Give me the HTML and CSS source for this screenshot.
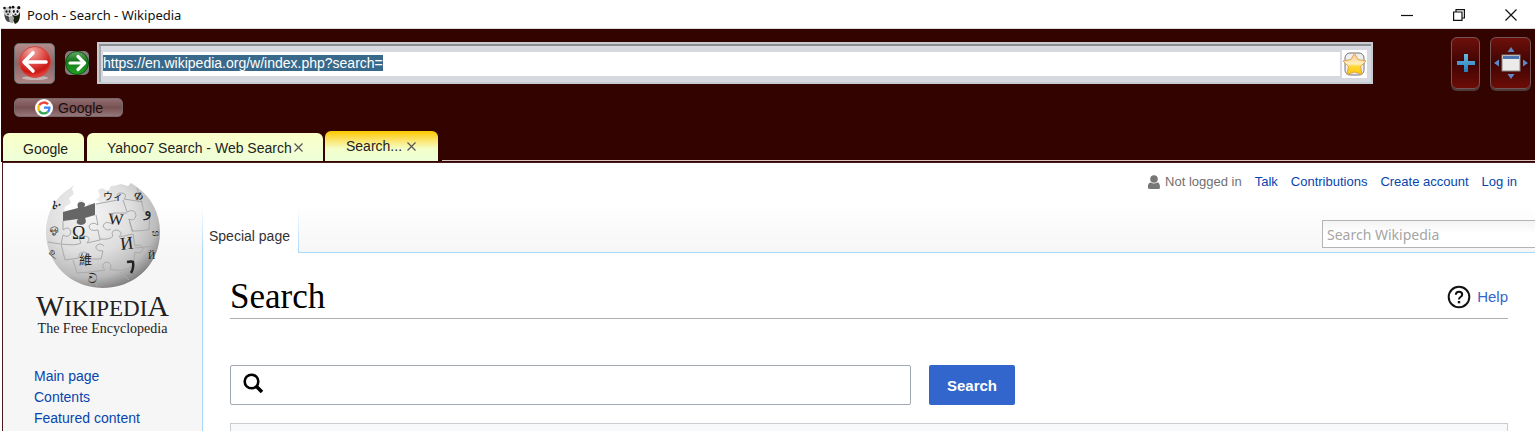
FILE: index.html
```html
<!DOCTYPE html>
<html lang="en">
<head>
<meta charset="utf-8">
<title>Pooh - Search - Wikipedia</title>
<link rel="stylesheet" href="styles.css">
</head>
<body>
<div class="window">
  <header class="titlebar">
    <svg class="app-icon" width="18" height="20" viewBox="0 0 18 20" aria-hidden="true">
      <path d="M10 5Q17 3 17 10Q17 17 12 19L9 14Z" fill="#18200f"/>
      <path d="M1 8Q7 10 7 17Q2 18 1 8Z" fill="#444"/>
      <path d="M6 12Q10 9 11 13L10 18Q6 19 6 12Z" fill="#aaa"/>
      <ellipse cx="5" cy="6.500" rx="4.500" ry="4.500" fill="#ccc"/>
      <ellipse cx="12.500" cy="6" rx="4.300" ry="4.800" fill="#e8e8e8"/>
      <g fill="#111"><circle cx="1.500" cy="3" r="1.300"/><circle cx="7" cy="2.500" r="1.200"/><circle cx="10" cy="2.200" r="1.400"/><circle cx="15.800" cy="2.700" r="1.600"/><ellipse cx="3.500" cy="6.500" rx="1" ry="1.300"/><ellipse cx="6.500" cy="6.500" rx=".8" ry="1.200"/><ellipse cx="10.800" cy="6.500" rx="1" ry="1.400"/><ellipse cx="14.500" cy="6.500" rx="1" ry="1.400"/><ellipse cx="5" cy="9.200" rx="1" ry=".7"/><ellipse cx="12.500" cy="9.200" rx="1" ry=".7"/></g>
    </svg>
    <span class="window-title">Pooh - Search - Wikipedia</span>
    <div class="window-controls">
      <button aria-label="Minimize"><svg width="12" height="12" viewBox="0 0 12 12"><path d="M0 6.500H12" stroke="#111" stroke-width="1.200"/></svg></button>
      <button aria-label="Restore"><svg width="12" height="12" viewBox="0 0 12 12" fill="none" stroke="#111" stroke-width="1.200"><path d="M.6 3H9V11.400H.6ZM3 3V.6H11.400V9H9"/></svg></button>
      <button aria-label="Close"><svg width="12" height="12" viewBox="0 0 12 12"><path d="M.5.5L11.500 11.500M11.500.5L.5 11.500" stroke="#111" stroke-width="1.200"/></svg></button>
    </div>
  </header>

  <div class="chrome">
    <div class="toolbar">
      <button class="back" aria-label="Back">
        <svg width="34" height="36" viewBox="0 0 34 36">
          <defs><radialGradient id="red" cx=".4" cy=".15" r=".9"><stop offset="0" stop-color="#f0aaa5"/><stop offset=".45" stop-color="#e04f4a"/><stop offset=".75" stop-color="#cb1713"/><stop offset="1" stop-color="#ef5750"/></radialGradient></defs>
          <ellipse cx="17" cy="33" rx="13" ry="2" fill="#c7b4b4"/>
          <circle cx="17" cy="17" r="15.500" fill="url(#red)" stroke="#c84843"/>
          <path d="M15 8L6 17L15 26M7 17H28" fill="none" stroke="#fff" stroke-width="3.600" stroke-linecap="round" stroke-linejoin="round"/>
        </svg>
      </button>
      <button class="forward" aria-label="Forward">
        <svg width="24" height="24" viewBox="0 0 24 24">
          <defs><linearGradient id="green" x2="0" y2="1"><stop stop-color="#6aa86d"/><stop offset=".4" stop-color="#16781b"/><stop offset="1" stop-color="#1ea51f"/></linearGradient></defs>
          <circle cx="12" cy="12" r="11.500" fill="url(#green)" stroke="#0c5012"/>
          <path d="M5 12H19M13 5.500L19.500 12L13 18.500" fill="none" stroke="#fff" stroke-width="3.200" stroke-linecap="round" stroke-linejoin="round"/>
        </svg>
      </button>
      <div class="address">
        <div class="address-field"><input class="url" aria-label="Address" value="https://en.wikipedia.org/w/index.php?search="></div>
        <button class="star" aria-label="Bookmark this page">
          <svg width="25" height="28" viewBox="0 0 25 28">
            <defs><linearGradient id="gold" x2="0" y2="1"><stop stop-color="#fbc78c"/><stop offset=".5" stop-color="#fff0bd"/><stop offset=".6" stop-color="#ffd83a"/><stop offset="1" stop-color="#ffc600"/></linearGradient></defs>
            <rect x="3" y="3" width="19" height="22" rx="5" fill="#eee" stroke="#777"/>
            <path d="M12.500 3.500L16 9.500L24 11L18.500 16.500L20 24.500L12.500 22L5 24.500L6.500 16.500L1 11L9 9.500Z" fill="url(#gold)" stroke="#dda34a" stroke-linejoin="round"/>
          </svg>
        </button>
      </div>
      <div class="tools">
        <button class="tool add" aria-label="New tab"><svg width="18" height="18" viewBox="0 0 18 18"><defs><linearGradient id="plus" x2="0" y2="1"><stop stop-color="#69b9e4"/><stop offset="1" stop-color="#237db7"/></linearGradient></defs><path d="M7 0H11V7H18V11H11V18H7V11H0V7H7Z" fill="url(#plus)"/></svg></button>
        <button class="tool full" aria-label="Full screen"><svg width="34" height="34" viewBox="0 0 34 34"><path d="M13.500 6L17 1L20.500 6ZM13.500 28L17 33L20.500 28ZM5 13.500V20.500L0 17ZM29 13.500V20.500L34 17Z" fill="#6288c4"/><rect x="8" y="9" width="18" height="16" fill="#ecebea" stroke="#888"/><path d="M9 10H25V13H9Z" fill="#4c75af"/></svg></button>
      </div>
    </div>
    <div class="bookmarks">
      <button class="bookmark">
        <svg width="18" height="18" viewBox="0 0 18 18" fill="none" stroke-width="2.300"><circle cx="9" cy="9" r="9" fill="#fff"/><path d="M13 5.200A5.600 5.600 0 0 0 4.200 6.200" stroke="#ea4335"/><path d="M4.200 6.200A5.600 5.600 0 0 0 4.200 11.800" stroke="#fbbc05"/><path d="M4.200 11.800A5.600 5.600 0 0 0 12.500 13.200" stroke="#34a853"/><path d="M12.500 13.200Q14.500 11.500 14.400 8.700H9" stroke="#4285f4"/></svg>
        Google
      </button>
    </div>
    <nav class="tabs" aria-label="Tabs">
      <button class="tab first">Google</button>
      <button class="tab second">Yahoo7 Search - Web Search <svg class="x" width="9" height="9" viewBox="0 0 9 9"><path d="M.5.5L8.500 8.500M8.500.5L.5 8.500"/></svg></button>
      <button class="tab current">Search... <svg class="x" width="9" height="9" viewBox="0 0 9 9"><path d="M.5.5L8.500 8.500M8.500.5L.5 8.500"/></svg></button>
      <span class="tab-line"></span>
    </nav>
  </div>

  <div class="page">
    <aside class="sidebar">
      <a class="logo" href="#">
        <svg width="116" height="108" viewBox="0 0 116 108" aria-hidden="true">
          <defs>
            <radialGradient id="globe" cx=".38" cy=".3" r=".75"><stop offset="0" stop-color="#f5f5f5"/><stop offset=".5" stop-color="#dedede"/><stop offset=".8" stop-color="#bababa"/><stop offset="1" stop-color="#777"/></radialGradient>
          </defs>
          <path d="M29 3L24 7C9 16 1 32 1 50C1 82 26 106 58 106C90 106 115 82 115 50C115 31 106 15 92 5L86 1L83 4L76 2Q70 4 66 4L63 9L57 6L53 8L55 14L51 18L55 20L50 22L47 23Q43 18 42 24L40 25L39 19Q34 16 33 22L34 26L19 29L20 25L26 21L24 16L29 12L27 7Z" fill="url(#globe)"/>
          <path d="M18 30L33 26Q31 19 37 20Q42 21 39 25L50 21V33L40 36Q43 42 36 43Q29 42 33 37L18 39Z" fill="#666"/>
          <g fill="none" stroke="#aaa"><path d="M18 39L18 48Q24 43 26 50Q24 57 18 53L16 62Q31 64 36 61Q32 54 40 54Q47 55 42 61L55 58L53 48Q44 50 44 44Q47 39 53 43L51 33"/><path d="M51 22L73 18Q70 10 77 11Q83 12 79 17L98 20M78 18L82 30Q90 26 91 33Q90 40 84 37L87 49Q100 49 105 47"/><path d="M55 57Q65 58 68 54Q65 48 72 48Q79 50 74 55L88 52L90 64Q97 61 98 67Q96 73 90 70L88 84Q77 91 65 87Q68 81 61 80Q55 83 60 88L46 90"/><path d="M16 62L20 78L34 76Q33 70 39 70Q46 72 41 77L56 77L58 69Q50 69 51 64Q55 60 59 64M28 78L32 91L46 90L52 104M3 60L15 62M88 50L84 37M82 31L68 31L67 42Q60 38 58 44Q61 50 66 47M75 90L84 98M90 66L110 64M104 47L105 31Q97 31 98 25L92 6"/></g>
          <path d="M82 80Q87 79 88 80Q89 86 86 91" fill="none" stroke="#222" stroke-width="2.500"/>
          <g class="globe-letters"><text x="27" y="57" font-size="18">Ω</text><text x="63" y="42" font-size="16" transform="rotate(4 62 42)">W</text><text x="76" y="68" font-size="18" transform="rotate(-7 75 68)">И</text><text x="34" y="82" font-size="13">維</text><text x="58" y="18" font-size="10">ウィ</text><text x="99" y="34" font-size="16">و</text><text x="87" y="15" font-size="12" transform="rotate(30 87 16)">Ф</text><text x="5" y="51" font-size="11" transform="rotate(-12 5 51)">ஓ</text><text x="8" y="28" font-size="13" transform="rotate(-30 8 28)">ፈ</text><text x="6" y="72" font-size="11" transform="rotate(40 6 68)">உ</text><text x="43" y="101" font-size="13">ව</text><text x="107" y="54" font-size="9">හ</text><text x="103" y="77" font-size="10">Й</text></g>
        </svg>
        <span class="wordmark"><span class="big">W</span>IKIPEDI<span class="big">A</span></span>
        <span class="tagline">The Free Encyclopedia</span>
      </a>
      <nav class="side-links"><a href="#">Main page</a><a href="#">Contents</a><a href="#">Featured content</a></nav>
    </aside>

    <div class="main">
      <div class="wiki-head">
        <nav class="personal">
          <span class="anon"><svg width="12" height="14" viewBox="0 0 12 14" fill="#777"><circle cx="6" cy="4" r="3.800"/><path d="M0 13V10Q1 7 3 7.500Q6 9.500 9 7.500Q12 7 12 13Q12 14 10 14H2Q0 14 0 13Z"/></svg>Not logged in</span>
          <a href="#">Talk</a><a href="#">Contributions</a><a href="#">Create account</a><a href="#">Log in</a>
        </nav>
        <div class="head-row">
          <a class="special" href="#">Special page</a>
          <input class="wiki-search" type="search" aria-label="Search Wikipedia" placeholder="Search Wikipedia">
        </div>
      </div>
      <main class="content">
        <div class="heading">
          <h1>Search</h1>
          <a class="help" href="#"><svg width="24" height="24" viewBox="0 0 24 24" fill="none" stroke="#111"><circle cx="12" cy="12" r="10.300" stroke-width="2"/><path d="M8.800 9.700Q9 6.800 12 6.800Q15.200 6.800 15.200 9.500Q15.200 11 13.500 12Q12 13 12 14.500" stroke-width="2"/><path d="M12 16V18.300" stroke-width="2.400"/></svg>Help</a>
        </div>
        <form class="search-form">
          <div class="search-box">
            <svg width="21" height="21" viewBox="0 0 21 21" fill="none" stroke="#000"><circle cx="8.500" cy="8.500" r="6.800" stroke-width="2.600"/><path d="M13 13L19 19" stroke-width="3.500"/></svg>
            <input aria-label="Search text">
          </div>
          <button class="submit" type="button">Search</button>
        </form>
        <div class="options"></div>
      </main>
    </div>
  </div>
</div>
<script src="script.js"></script>
</body>
</html>
```
FILE: script.js
```js
// The address is selected on load so that typing replaces it.
const address = document.querySelector(".url");
address.focus();
address.select();
```
FILE: styles.css
```css
* { box-sizing: border-box; }
body { margin: 0; background: #fff; font-family: "Liberation Sans", Arial, sans-serif; }
button { margin: 0; padding: 0; border: 0; background: none; font: inherit; color: inherit; }
input { font: inherit; min-width: 0; }
svg { display: block; flex: none; }
a { color: #0645ad; text-decoration: none; }

.window { display: flex; flex-direction: column; height: 100vh; padding: 0 4px 4px 1px; overflow: hidden; }

.titlebar { display: flex; align-items: center; flex: none; height: 29px; padding: 2px 12px 0 2px; gap: 6px; border-bottom: 1px solid #ddd; }
.window-title { font: 13px "Noto Sans", "Open Sans", sans-serif; color: #111; }
.window-controls { display: flex; gap: 40px; margin-left: auto; padding-right: 6px; }

.chrome { flex: none; background: #330300; }
.toolbar { display: flex; align-items: center; padding: 8px 4px 0 13px; }
.back { display: grid; place-items: center; width: 41px; height: 41px; border: 1px solid #667070; border-radius: 5px; background: linear-gradient(#b48b8b, #936363 50%, #ab8585); }
.forward { width: 24px; height: 24px; margin: 0 8px 0 10px; border-radius: 5px; background: #817b7b; }
.address { display: flex; align-items: center; flex: 1; height: 42px; padding: 4px 4px 2px; gap: 2px; border: 2px solid #c8ccd2; background: #d6d9df; box-shadow: inset 0 2px #8e8f93, inset 2px 0 #a6a7ab; }
.address-field { flex: 1; display: flex; background: #fff; height: 24px; }
.url { flex: 1; height: 22px; padding: 0; border: 0; outline: 0; background: #fff; font-size: 14px; line-height: 20px; color: #222; }
.url::selection { background: #39698a; color: #fff; }
.star { background: #fff; }
.tools { display: flex; gap: 10px; margin-left: 78px; }
.tool { display: grid; place-items: center; height: 52px; border: 1px solid #755; border-radius: 6px; background: linear-gradient(#6e100b, #3f0503 50%, #6c0c06); box-shadow: 0 2px #4d3c3c; }
.add { width: 29px; }
.full { width: 41px; }

.bookmarks { padding: 9px 13px 14px; }
.bookmark { display: flex; align-items: center; gap: 5px; width: 109px; height: 19px; padding-left: 20px; border: 1px solid #756668; border-radius: 5px; background: linear-gradient(#916d6f, #775052 50%, #967779); font-size: 14px; color: #190d0d; }

.tabs { display: flex; align-items: flex-end; padding: 0 0 1px 2px; }
.tab { display: flex; align-items: center; gap: 5px; height: 28px; border-radius: 6px 6px 0 0; background: linear-gradient(#fbffc8, #edffd8); font-size: 14px; color: #222; white-space: nowrap; }
.first { width: 81px; padding: 3px 0 0 20px; }
.second { width: 236px; margin-left: 3px; padding: 1px 0 0 20px; gap: 2px; }
.current { height: 30px; width: 113px; margin-left: 2px; padding-left: 21px; background: linear-gradient(#fdc800, #fbe87a 35%, #f4ffc9 60%, #edffd8); }
.x { stroke: #555; stroke-width: 1.2; }
.tab-line { flex: 1; height: 1px; margin-left: 4px; background: #d9c4c4; }

.page { display: flex; flex: 1; min-height: 0; margin-left: 1px; border-left: 1px solid #4b1b1b; border-top: 1px solid #4b1b1b; overflow: hidden; background: linear-gradient(#fff 40px, #f6f6f6 90px); }
.sidebar { flex: none; width: 199px; }
.logo { display: flex; flex-direction: column; align-items: center; padding-top: 19px; color: #222; font-family: "Liberation Serif", serif; }
.globe-letters { font-family: "Liberation Serif", "Noto Sans CJK SC", "DejaVu Sans", serif; fill: #222; }
.wordmark { font-size: 23px; line-height: 32px; height: 31px; white-space: nowrap; }
.big { font-size: 30px; }
.tagline { font-size: 14px; line-height: 16px; white-space: nowrap; }
.side-links { display: flex; flex-direction: column; padding: 29px 0 0 31px; font-size: 14px; line-height: 21px; }

.main { display: flex; flex-direction: column; flex: 1; min-width: 0; }
.wiki-head { display: flex; flex-direction: column; justify-content: space-between; flex: none; height: 90px; }
.personal { display: flex; justify-content: flex-end; gap: 13px; padding: 10px 18px 0 0; font-size: 13px; line-height: 18px; }
.anon { display: flex; align-items: center; gap: 5px; color: #707070; }
.head-row { display: flex; justify-content: space-between; height: 46px; background: linear-gradient(#a7d7f9, #a7d7f9) 0 100% / 100% 1px no-repeat; }
.special { padding: 19px 8px 0 6px; border: solid; border-width: 0 1px; border-image: linear-gradient(#fff, #a7d7f9) 1; background: #fff; color: #333; font-size: 14px; line-height: 20px; }
.wiki-search { width: 213px; height: 28px; margin-top: 13px; padding: 0 4px; border: 1px solid #b4b4b4; border-right: 0; border-radius: 0; background: linear-gradient(#f4f4f4, #fff 50%); font: 14px "Noto Sans", "Open Sans", sans-serif; outline: 0; appearance: none; }
.wiki-search::placeholder { color: #a5a5a5; opacity: 1; }

.content { flex: 1; padding: 22px 27px 0; border-left: 1px solid #a7d7f9; background: #fff; }
.heading { display: flex; justify-content: space-between; align-items: center; height: 44px; border-bottom: 1px solid #b0b0b0; }
h1 { margin: 0; font: 35px/44px "Liberation Serif", Georgia, serif; color: #000; }
.help { display: flex; align-items: center; gap: 6px; font-size: 15px; color: #36c; }
.search-form { display: flex; gap: 18px; padding: 46px 0 18px; }
.search-box { display: flex; align-items: center; width: 681px; height: 40px; padding: 0 12px; gap: 8px; border: 1px solid #a2a9b1; border-radius: 2px; }
.search-box svg { margin-bottom: 4px; }
.search-box input { flex: 1; border: 0; outline: 0; background: none; }
.submit { width: 86px; height: 40px; border-radius: 2px; background: #36c; color: #fff; font-size: 15px; font-weight: bold; }
.options { height: 60px; border: 1px solid #c8ccd1; background: #f8f9fa; }
```
